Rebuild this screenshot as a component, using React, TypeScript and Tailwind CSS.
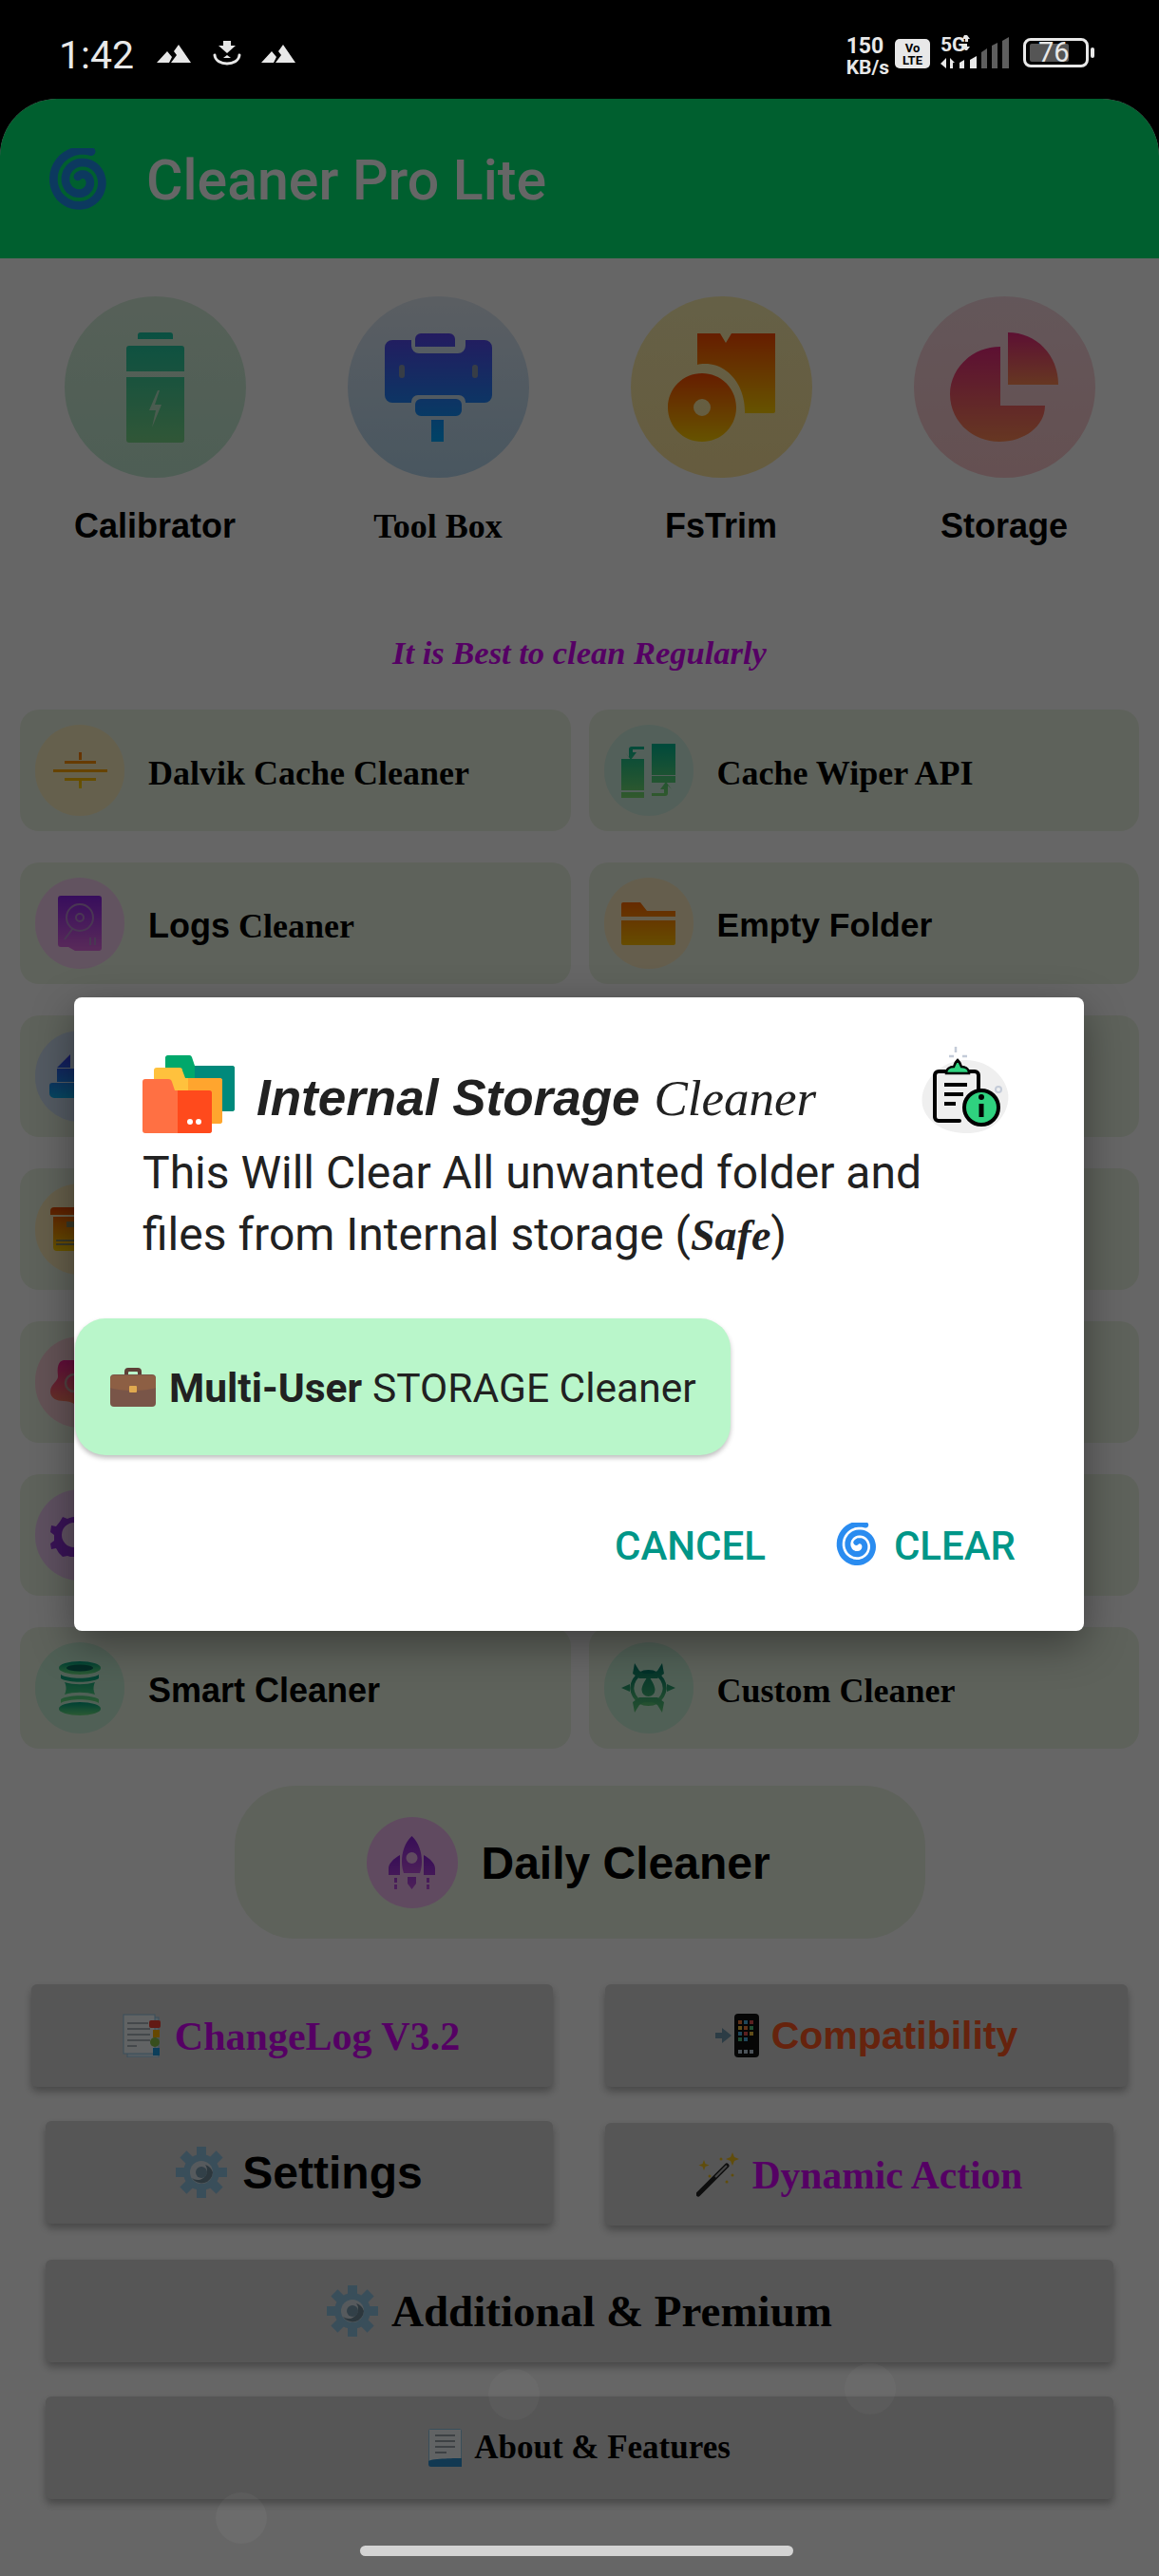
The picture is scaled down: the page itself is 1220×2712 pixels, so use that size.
import type { ReactNode } from 'react';

const sans = "font-['Liberation_Sans',Arial,sans-serif]";
const serif = "font-['Liberation_Serif','Times_New_Roman',serif]";
const roboto = "font-['Roboto',sans-serif]";

// spiral logo, built once from polar points
const spiralPath = (() => {
  const pts: string[] = [];
  const turns = 2.15;
  const steps = 90;
  for (let i = 0; i <= steps; i++) {
    const t = i / steps;
    const a = (-70 - t * 360 * turns) * (Math.PI / 180);
    const r = 21 - 17.5 * t;
    pts.push(`${(24 + r * Math.cos(a)).toFixed(1)} ${(24 + r * Math.sin(a)).toFixed(1)}`);
  }
  return 'M' + pts.join('L');
})();

function Spiral({ className, color }: { className: string; color: string }) {
  return (
    <svg viewBox="2 2 44 44" className={className} preserveAspectRatio="none">
      <path d={spiralPath} fill="none" stroke={color} strokeWidth="5.6" strokeLinecap="round" />
    </svg>
  );
}

function Grad({ id, from, to }: { id: string; from: string; to: string }) {
  return (
    <defs>
      <linearGradient id={id} x1="0" y1="0" x2="0" y2="1">
        <stop offset="0" stopColor={from} />
        <stop offset="1" stopColor={to} />
      </linearGradient>
    </defs>
  );
}

function BatteryIcon() {
  return (
    <svg width="61" height="116" viewBox="0 0 61 116">
      <Grad id="bat" from="#19c9a6" to="#7ad88a" />
      <path
        fill="url(#bat)"
        d="M15 0h31a3 3 0 0 1 3 3v4H12V3a3 3 0 0 1 3-3ZM3 14h55a3 3 0 0 1 3 3v24H0V17a3 3 0 0 1 3-3ZM0 47h61v66a3 3 0 0 1-3 3H3a3 3 0 0 1-3-3Z"
      />
      <path fill="#d8ecd8" d="M33 61 24 82h7l-4 18 10-24h-7l5-15Z" opacity="0.75" />
    </svg>
  );
}

function ToolBoxIcon() {
  return (
    <svg width="113" height="114" viewBox="0 0 113 114">
      <Grad id="tool" from="#5a45f0" to="#00a8ff" />
      <path
        fill="url(#tool)"
        d="M38 0h30a6 6 0 0 1 6 6v8H32V6a6 6 0 0 1 6-6ZM8 7h20v6a8 8 0 0 0 8 8h41a8 8 0 0 0 8-8V7h20a8 8 0 0 1 8 8v50a8 8 0 0 1-8 8H85v-1a7 7 0 0 0-7-7H35a7 7 0 0 0-7 7v1H8a8 8 0 0 1-8-8V15a8 8 0 0 1 8-8ZM38 69h37a6 6 0 0 1 6 6v6a6 6 0 0 1-6 6H38a6 6 0 0 1-6-6v-6a6 6 0 0 1 6-6ZM49 91h13v23H49Z"
      />
      <rect x="15" y="33" width="6" height="14" rx="3" fill="#8a98b0" />
      <rect x="92" y="33" width="6" height="14" rx="3" fill="#8a98b0" />
    </svg>
  );
}

function FsTrimIcon() {
  return (
    <svg width="113" height="114" viewBox="0 0 113 114">
      <Grad id="fst" from="#ff4a00" to="#ffd000" />
      <path
        fill="url(#fst)"
        d="M31 0h24l6 10 6-10h46v82a2 2 0 0 1-2 2H81c1-27-16-52-42-52-3 0-6 0-8 1Z"
      />
      <path
        fill="url(#fst)"
        fillRule="evenodd"
        d="M36 42c20 0 36 16 36 36s-16 36-36 36S0 98 0 78s16-36 36-36Zm0 27a9 9 0 1 0 0 18 9 9 0 0 0 0-18Z"
      />
    </svg>
  );
}

function PieIcon() {
  return (
    <svg width="114" height="116" viewBox="0 0 114 116">
      <Grad id="pie" from="#e8287f" to="#ff8a55" />
      <path fill="url(#pie)" d="M53 15v62h47c0 22-22 38-48 38C22 115 0 92 0 65s23-50 53-50Z" />
      <path fill="url(#pie)" d="M61 0c30 0 53 24 53 55H61Z" />
    </svg>
  );
}

function CapacitorIcon() {
  return (
    <svg width="57" height="38" viewBox="0 0 57 38">
      <Grad id="cap" from="#ff7a00" to="#ffd400" />
      <path
        fill="url(#cap)"
        d="M27 0h3v8h-3ZM12 9h33v3H12ZM0 18h57v3H0ZM12 27h33v3H12ZM27 30h3v8h-3Z"
      />
    </svg>
  );
}

function CacheIcon() {
  return (
    <svg width="57" height="57" viewBox="0 0 57 57">
      <Grad id="cac" from="#00b894" to="#7ddf70" />
      <path
        fill="url(#cac)"
        d="M32 0h25v33H32ZM32 34h25v7H32ZM0 16h24v33H0ZM0 51h24v6H0ZM8 14V6a3 3 0 0 1 3-3h13v3H12v3h4l-6 8-6-8ZM49 44v8a3 3 0 0 1-3 3H32v-3h13v-4h-4l6-8 6 8Z"
      />
    </svg>
  );
}

function DiskIcon() {
  return (
    <svg width="46" height="58" viewBox="0 0 46 58">
      <Grad id="dsk" from="#8a22e8" to="#e06ae0" />
      <path fill="url(#dsk)" d="M3 0h40a3 3 0 0 1 3 3v52a3 3 0 0 1-3 3H18l-7-4H3a3 3 0 0 1-3-3V3a3 3 0 0 1 3-3Z" />
      <circle cx="23" cy="23" r="14" fill="none" stroke="#b78ad0" strokeWidth="2" />
      <circle cx="23" cy="23" r="4" fill="none" stroke="#b78ad0" strokeWidth="2" />
      <path d="M16 34 7 46M34 44v8M39 44v8" stroke="#b78ad0" strokeWidth="2" fill="none" />
    </svg>
  );
}

function FolderIcon() {
  return (
    <svg width="57" height="45" viewBox="0 0 57 45">
      <Grad id="fol" from="#ff6a00" to="#ffbe00" />
      <path fill="url(#fol)" d="M0 2a2 2 0 0 1 2-2h18l7 9h30v6H0ZM0 19h57v24a2 2 0 0 1-2 2H2a2 2 0 0 1-2-2Z" />
    </svg>
  );
}

function BlockIcon() {
  return (
    <svg width="41" height="46" viewBox="0 0 41 46" className="-ml-[1px]">
      <Grad id="blk" from="#3a3ae8" to="#10b0f0" />
      <path fill="url(#blk)" d="M22 0v14H8ZM8 15h33v14H8ZM3 30h38v16H5a5 5 0 0 1-5-5V33a3 3 0 0 1 3-3Z" />
    </svg>
  );
}

function BoxIcon() {
  return (
    <svg width="25" height="46" viewBox="0 0 25 46">
      <Grad id="bx" from="#e84a00" to="#ffd000" />
      <path fill="url(#bx)" d="M4 0h21v8H0V4a4 4 0 0 1 4-4ZM3 10h22v36H7a4 4 0 0 1-4-4Z" />
      <path fill="#8a8a62" d="M17 15h8v6h-8ZM6 34h19v2H6ZM6 38h19v2H6Z" />
    </svg>
  );
}

function BlobIcon() {
  return (
    <svg width="25" height="46" viewBox="0 0 25 46">
      <Grad id="blb" from="#f02090" to="#ff8060" />
      <path fill="url(#blb)" d="M25 0H14C8 1 7 8 8 16c1 6-8 9-8 17 0 7 7 10 14 10 4 0 8 1 11 3Z" />
      <circle cx="25" cy="24" r="9" fill="none" stroke="#c9a0a0" strokeWidth="2.5" />
    </svg>
  );
}

function PurpleGear() {
  return (
    <svg width="25" height="46" viewBox="0 0 25 46">
      <path
        fill="#9030d8"
        d="M25 0v4c-3 0-5 1-7 2l-5-2-3 5-4 5-5-1-1 7 4 3v6l-4 3 1 6 5-1 3 5 4 4 5-1c2 1 4 1 7 1V36a13 13 0 0 1 0-26Z"
      />
    </svg>
  );
}

function SmartIcon() {
  return (
    <svg width="44" height="57" viewBox="0 0 44 57">
      <Grad id="smt" from="#00a080" to="#6ce080" />
      <ellipse cx="22" cy="7" rx="22" ry="7" fill="url(#smt)" />
      <ellipse cx="22" cy="7" rx="14" ry="3.5" fill="#0a6a5a" />
      <path fill="url(#smt)" d="M2 14c8 5 32 5 40 0v4c-8 5-32 5-40 0ZM6 22c10 3 22 3 32 0-2 4-2 9 0 13-10-3-22-3-32 0 2-4 2-9 0-13ZM2 40c8-5 32-5 40 0v4c-8-5-32-5-40 0Z" />
      <ellipse cx="22" cy="50" rx="22" ry="7" fill="url(#smt)" />
    </svg>
  );
}

function CustomIcon() {
  return (
    <svg width="57" height="52" viewBox="0 0 57 52">
      <Grad id="cst" from="#007a68" to="#5cc878" />
      <path fill="none" stroke="url(#cst)" strokeWidth="4" d="M28.5 9a17 17 0 1 0 .01 0Z" />
      <path fill="url(#cst)" d="M28.5 13c5 7 7 12 7 15a7 7 0 0 1-14 0c0-3 2-8 7-15ZM14 0l5 8 5 3h9l5-3 5-8 2 11-7 5H19l-7-5ZM14 52l5-8 5-3h9l5 3 5 8 2-11-7-5H19l-7 5ZM0 26l9-4v8ZM57 26l-9-4v8Z" />
    </svg>
  );
}

function RocketIcon() {
  return (
    <svg width="49" height="56" viewBox="0 0 49 56">
      <Grad id="rkt" from="#8a22d8" to="#c050e0" />
      <path fill="url(#rkt)" fillRule="evenodd" d="M24.5 0C32 7 35 17 35 27c0 5-1 9-2 12H16c-1-3-2-7-2-12 0-10 3-20 10.5-27Zm0 17a6 6 0 1 0 0 12 6 6 0 0 0 0-12Z" />
      <path fill="url(#rkt)" d="M12 20v21H0v-7c0-5 5-10 12-14ZM37 20v21h12v-7c0-5-5-10-12-14ZM20 43h9v7l-4.500 6-4.500-6ZM6 44h3v5H6ZM6 51h3v5H6ZM40 44h3v5h-3ZM40 51h3v5h-3Z" />
    </svg>
  );
}

function Gear({ size = 54 }: { size?: number }) {
  const teeth = [0, 45, 90, 135, 180, 225, 270, 315];
  return (
    <svg width={size} height={size} viewBox="0 0 54 54">
      {teeth.map((deg) => (
        <rect key={deg} x="22" y="0" width="10" height="12" fill="#8fc2e2" transform={`rotate(${deg} 27 27)`} />
      ))}
      <circle cx="27" cy="27" r="19" fill="#8fc2e2" />
      <circle cx="27" cy="27" r="12" fill="#d6e2e8" />
      <path d="M39 27a12 12 0 0 1-22 6 10 10 0 0 0 16-8 8 8 0 0 0-2-6 12 12 0 0 1 8 8Z" fill="#6e8a9a" />
      <circle cx="27" cy="27" r="6" fill="#7da0b4" />
    </svg>
  );
}

function NotebookIcon() {
  return (
    <svg width="41" height="46" viewBox="0 0 41 46">
      <rect x="5" y="4" width="33" height="42" fill="#cfe6f5" stroke="#8fc2e2" />
      <rect x="1" y="1" width="33" height="41" fill="#f2f7fa" stroke="#8fc2e2" />
      <path d="M5 10h22M5 16h24M5 22h24M5 28h24M5 34h10" stroke="#aab4bb" strokeWidth="2" />
      <rect x="28" y="7" width="12" height="8" rx="2" fill="#f44336" />
      <rect x="32" y="17" width="7" height="8" fill="#ffb300" />
      <circle cx="34" cy="30" r="5" fill="#8bc34a" />
      <rect x="32" y="36" width="7" height="8" fill="#1e9be0" />
    </svg>
  );
}

function PhoneIcon() {
  return (
    <svg width="46" height="46" viewBox="0 0 46 46">
      <path d="M0 20h7v-5l10 8-10 8v-5H0Z" fill="#6f97ad" />
      <rect x="20" y="0" width="26" height="46" rx="4" fill="#111" />
      <g fill="#ef7a3c">
        <rect x="24" y="7" width="4" height="4" />
        <rect x="30" y="7" width="4" height="4" fill="#4fb0e0" />
        <rect x="36" y="7" width="4" height="4" fill="#e05050" />
        <rect x="24" y="13" width="4" height="4" fill="#f0c040" />
        <rect x="30" y="13" width="4" height="4" />
        <rect x="36" y="13" width="4" height="4" fill="#50c080" />
        <rect x="24" y="19" width="4" height="4" fill="#4fb0e0" />
        <rect x="30" y="19" width="4" height="4" fill="#e05050" />
        <rect x="36" y="19" width="4" height="4" fill="#f0c040" />
        <rect x="24" y="25" width="4" height="4" fill="#50c080" />
        <rect x="30" y="25" width="4" height="4" fill="#4fb0e0" />
        <rect x="24" y="38" width="4" height="4" fill="#bcd" />
        <rect x="30" y="38" width="4" height="4" fill="#bcd" />
        <rect x="36" y="38" width="4" height="4" fill="#bcd" />
      </g>
    </svg>
  );
}

function WandIcon() {
  return (
    <svg width="45" height="47" viewBox="0 0 45 47">
      <path d="M32 14 2 44" stroke="#222" strokeWidth="5" strokeLinecap="round" />
      <path d="M32 14 20 26" stroke="#e8e8e8" strokeWidth="2" opacity="0.7" />
      <g fill="#f0c020">
        <path d="m38 0 2 5 5 2-5 2-2 5-2-5-5-2 5-2Z" />
        <path d="m8 8 1.500 4 4 1.500-4 1.500L8 19l-1.500-4-4-1.500 4-1.500Z" />
        <circle cx="26" cy="7" r="1.500" />
        <circle cx="14" cy="25" r="1.500" />
        <circle cx="38" cy="24" r="1.500" />
        <circle cx="32" cy="31" r="1.500" />
      </g>
    </svg>
  );
}

function BookIcon() {
  return (
    <svg width="35" height="40" viewBox="0 0 35 40">
      <rect x="0.500" y="0.500" width="34" height="39" rx="1" fill="#f2f7fa" stroke="#8fc2e2" />
      <path d="M7 7h21M7 13h21M7 19h21M7 25h12" stroke="#9aa4aa" strokeWidth="2" />
      <path d="M0 34c4-3 31-3 35-3v9H3a3 3 0 0 1-3-3Z" fill="#2f8fcc" />
    </svg>
  );
}

function Briefcase() {
  return (
    <svg width="48" height="42" viewBox="0 0 48 42">
      <path d="M15 9V5a4 4 0 0 1 4-4h10a4 4 0 0 1 4 4v4h-4V6a1 1 0 0 0-1-1h-8a1 1 0 0 0-1 1v3Z" fill="#5d4037" />
      <rect x="0" y="8" width="48" height="34" rx="4" fill="#795548" />
      <path d="M0 22c10 4 38 4 48 0v-9a4 4 0 0 0-4-4H4a4 4 0 0 0-4 4Z" fill="#8d5f44" />
      <rect x="20" y="20" width="8" height="7" rx="1" fill="#e0a94f" />
    </svg>
  );
}

function Folders() {
  return (
    <svg width="97" height="82" viewBox="0 0 97 82">
      <path d="M24 2a3 3 0 0 1 3-2h22a3 3 0 0 1 3 2l3 9h39a3 3 0 0 1 3 3v42a3 3 0 0 1-3 3H24Z" fill="#00a86b" />
      <path d="M55 11h39a3 3 0 0 1 3 3v42a3 3 0 0 1-3 3H55Z" fill="#00897b" />
      <path d="M12 16a3 3 0 0 1 3-3h24a3 3 0 0 1 3 3l3 8h36a3 3 0 0 1 3 3v42a3 3 0 0 1-3 3H12Z" fill="#ffc13d" />
      <path d="M48 24h33a3 3 0 0 1 3 3v42a3 3 0 0 1-3 3H48Z" fill="#ffa52e" />
      <path d="M0 28a3 3 0 0 1 3-3h24a4 4 0 0 1 4 3l3 9h36a3 3 0 0 1 3 3v39a3 3 0 0 1-3 3H3a3 3 0 0 1-3-3Z" fill="#ff7043" />
      <path d="M37 37h33a3 3 0 0 1 3 3v39a3 3 0 0 1-3 3H37Z" fill="#ff4a1c" />
      <circle cx="50" cy="70" r="3" fill="#fff" />
      <circle cx="59" cy="70" r="3" fill="#fff" />
    </svg>
  );
}

function ClipboardInfo() {
  return (
    <svg width="93" height="92" viewBox="0 0 93 92">
      <path d="M47 14c20 0 40 14 44 34 3 20-12 42-40 43C28 92 6 82 1 62-3 40 18 14 47 14Z" fill="#efefef" />
      <path d="M36 0v6M29 10h5M43 10h5" stroke="#c4cbd8" strokeWidth="2.500" />
      <circle cx="81" cy="45" r="3" fill="none" stroke="#c4cbd8" strokeWidth="2" />
      <path d="M25 26h-7a4 4 0 0 0-4 4v44a4 4 0 0 0 4 4h22M50 26h6a4 4 0 0 1 4 4v20" fill="none" stroke="#000" strokeWidth="4" strokeLinecap="round" />
      <path d="M38 14c3 3 3 5 4 7 4 0 8 2 8 7H26c0-5 4-7 8-7 1-2 1-4 4-7Z" fill="#2fd27f" stroke="#000" strokeWidth="2.500" />
      <path d="M24 40h24M24 50h20M24 60h12" stroke="#000" strokeWidth="4" />
      <circle cx="63" cy="64" r="18" fill="#2fd27f" stroke="#000" strokeWidth="4" />
      <path d="M63 60v14" stroke="#000" strokeWidth="5" />
      <circle cx="63" cy="53" r="3" fill="#000" />
    </svg>
  );
}

function Mountains() {
  return (
    <svg width="36" height="20" viewBox="0 0 36 20">
      <path fill="#e8e8e8" d="M0 19 11 7l5 6-3 6ZM15 19l6-8-3-4 5-7 13 19Z" />
    </svg>
  );
}

function DownloadBowl() {
  return (
    <svg width="30" height="27" viewBox="0 0 30 27">
      <path fill="#e8e8e8" d="M11 0h8v5h5l-9 8-9-8h5Z" />
      <path d="M2 15c1 12 25 12 26 0" fill="none" stroke="#e8e8e8" strokeWidth="3" strokeLinecap="round" />
      <path d="M11 18h8l-4-3Z" fill="#e8e8e8" />
    </svg>
  );
}

function Signal() {
  return (
    <svg width="72" height="44" viewBox="0 -8 72 44" className={`-mt-[8px] ${roboto}`}>
      <text x="0" y="17" fontSize="21" fontWeight="700" fill="#e8e8e8">5G</text>
      <path fill="#e8e8e8" d="M25 0h3l3 4h-2v3h-3V4h-3ZM25 9h3v3h3l-3 4h-2l-3-4h2Z" />
      <path fill="#e8e8e8" d="M6 24v11L0 30ZM8 24l0 11h0ZM10 24l5 5h-2v6h-3ZM20 29l5-3v9h-5ZM31 26l7-4v13h-7Z" />
      <path fill="#5e5e5e" d="M43 18l6-4v21h-6ZM54 11l6-3v27h-6ZM65 6l7-4v33h-7Z" />
    </svg>
  );
}

function StatusBar() {
  return (
    <div className={`relative z-20 flex h-[104px] items-start bg-black pl-[62px] pr-[68px] pt-[38px] ${roboto}`}>
      <span className="text-[41px] leading-[40px] text-[#e8e8e8]">1:42</span>
      <div className="ml-[24px] mt-[9px]"><Mountains /></div>
      <div className="ml-[23px] mt-[5px]"><DownloadBowl /></div>
      <div className="ml-[21px] mt-[9px]"><Mountains /></div>
      <div className="ml-auto -mt-[1px] flex items-start">
        <div className="mt-[1px] flex flex-col items-start text-[23px] font-bold leading-[22px] text-[#e8e8e8]">
          <span>150</span>
          <span className="text-[21px]">KB/s</span>
        </div>
        <div className="ml-[6px] mt-[4px] flex h-[31px] w-[37px] flex-col items-center justify-center rounded-[5px] bg-[#e8e8e8] text-[13px] font-bold leading-[13px] text-black">
          <span>Vo</span>
          <span>LTE</span>
        </div>
        <div className="ml-[11px]"><Signal /></div>
        <div className="relative ml-[15px] mt-[3px] flex h-[31px] w-[69px] items-center rounded-[8px] border-[3px] border-[#e8e8e8] pl-[4px]">
          <div className="h-[19px] w-[41px] rounded-[2px] bg-[#555]" />
          <span className="absolute left-[13px] top-[-3px] text-[29px] leading-[31px] text-[#e8e8e8]">76</span>
        </div>
        <div className="ml-[2px] mt-[13px] h-[11px] w-[4px] rounded-[2px] bg-[#e8e8e8]" />
      </div>
    </div>
  );
}

function Header() {
  return (
    <header className="flex h-[168px] items-start rounded-t-[60px] bg-[#00ed76] pl-[51px] pt-[52px]">
      <Spiral className="h-[69px] w-[68px] shrink-0" color="#1f8fee" />
      <h1 className={`ml-[35px] mt-[1px] whitespace-nowrap text-[59px] font-medium leading-[66px] text-white ${roboto}`}>Cleaner Pro Lite</h1>
    </header>
  );
}

type Tile = { label: string; font: string; circle: string; icon: ReactNode };

const tiles: Tile[] = [
  { label: 'Calibrator', font: sans, circle: 'from-[#d8f0dc] to-[#c2ecd4]', icon: <BatteryIcon /> },
  { label: 'Tool Box', font: serif, circle: 'from-[#e2ebf6] to-[#b6d8f0]', icon: <ToolBoxIcon /> },
  { label: 'FsTrim', font: sans, circle: 'from-[#fdf0b0] to-[#fee69c]', icon: <FsTrimIcon /> },
  { label: 'Storage', font: sans, circle: 'from-[#f8d8e0] to-[#fcc8cc]', icon: <PieIcon /> },
];

function Card({ circle, icon, children }: { circle: string; icon?: ReactNode; children?: ReactNode }) {
  return (
    <div className="flex h-[128px] items-center rounded-[20px] bg-[#ecf5e4] pl-[16px]">
      <div className={`flex h-[96px] w-[94px] items-center justify-center rounded-full ${circle}`}>{icon}</div>
      {children}
    </div>
  );
}

function CardLabel({ font, size = 'text-[36px]', children }: { font: string; size?: string; children: ReactNode }) {
  return <span className={`ml-[25px] mt-[5px] font-bold text-black ${size} ${font}`}>{children}</span>;
}

function GrayButton({ className, children }: { className: string; children: ReactNode }) {
  return (
    <div className={`flex h-[108px] items-center justify-center rounded-[6px] bg-[#d6d6d6] shadow-[0_5px_8px_rgba(0,0,0,0.3)] ${className}`}>
      {children}
    </div>
  );
}

function Dialog() {
  return (
    <div className="absolute left-[78px] top-[1050px] z-30 h-[667px] w-[1063px] rounded-[8px] bg-white shadow-[0_14px_44px_rgba(0,0,0,0.38)]">
      <div className="flex items-start pl-[72px] pr-[78px] pt-[52px]">
        <div className="mt-[9px] shrink-0"><Folders /></div>
        <h2 className="ml-[23px] mt-[24px] whitespace-nowrap text-[#212121]">
          <span className={`text-[53px] font-bold italic leading-[60px] ${sans}`}>Internal Storage</span>
          <span className={`ml-[15px] text-[53px] italic leading-[60px] ${serif}`}>Cleaner</span>
        </h2>
        <div className="ml-auto"><ClipboardInfo /></div>
      </div>
      <div className={`mt-[8px] pl-[72px] text-[48px] leading-[65px] text-[#212121] ${roboto}`}>
        <p>This Will Clear All unwanted folder and</p>
        <p>
          <span>files from Internal storage (</span>
          <span className={`text-[46px] font-bold italic ${serif}`}>Safe</span>
          <span>)</span>
        </p>
      </div>
      <div className={`mt-[55px] ml-[1px] flex h-[144px] w-[690px] items-center rounded-[32px] bg-[#b9f6ca] pl-[37px] text-[42.5px] text-[#212121] shadow-[0_3px_5px_rgba(0,0,0,0.25)] ${roboto}`}>
        <Briefcase />
        <span className="ml-[14px] mt-[3px] font-bold">Multi-User</span>
        <span className="ml-[11px] mt-[3px]">STORAGE Cleaner</span>
      </div>
      <div className={`mt-[69px] flex items-center justify-end pr-[72px] text-[42px] font-medium leading-[48px] text-[#009688] ${roboto}`}>
        <span className="mt-[3px]">CANCEL</span>
        <Spiral className="ml-[74px] h-[48px] w-[47px]" color="#2a8cf0" />
        <span className="ml-[14px] mt-[3px]">CLEAR</span>
      </div>
    </div>
  );
}

export default function App() {
  return (
    <div className="relative h-[2712px] w-[1220px] overflow-hidden bg-black">
      <StatusBar />
      <div className="h-[2608px] overflow-hidden rounded-t-[60px] bg-white">
        <Header />

        <div className="grid grid-cols-4 px-[14px] pt-[40px]">
          {tiles.map((t) => (
            <div key={t.label} className="flex flex-col items-center">
              <div className={`flex h-[191px] w-[191px] items-center justify-center rounded-full bg-gradient-to-b ${t.circle}`}>{t.icon}</div>
              <span className={`mt-[31px] text-[36px] font-bold leading-[40px] text-black ${t.font}`}>{t.label}</span>
            </div>
          ))}
        </div>

        <p className={`mt-[93px] text-center text-[34.5px] font-bold italic leading-[40px] text-[#d500f9] ${serif}`}>It is Best to clean Regularly</p>

        <div className="mt-[40px] grid grid-cols-2 gap-x-[19px] gap-y-[33px] px-[21px]">
          <Card circle="bg-[#fdf0c0]" icon={<CapacitorIcon />}><CardLabel font={serif}>Dalvik Cache Cleaner</CardLabel></Card>
          <Card circle="bg-[#d0f0e0]" icon={<CacheIcon />}><CardLabel font={serif}>Cache Wiper API</CardLabel></Card>
          <Card circle="bg-[#f6d0f0]" icon={<DiskIcon />}>
            <span className={`ml-[25px] mt-[5px] text-[36px] font-bold text-black ${sans}`}>Logs</span>
            <span className={`ml-[9px] mt-[5px] text-[36px] font-bold text-black ${serif}`}>Cleaner</span>
          </Card>
          <Card circle="bg-[#fdecc0]" icon={<FolderIcon />}><CardLabel font={sans} size="text-[35.5px]">Empty Folder</CardLabel></Card>
          <Card circle="justify-start! pl-[16px] bg-[#cfe0f4]" icon={<BlockIcon />} />
          <Card circle="bg-[#d8f0dc]" />
          <Card circle="justify-start! pl-[16px] bg-[#fdecb8]" icon={<BoxIcon />} />
          <Card circle="bg-[#d8f0dc]" />
          <Card circle="justify-start! pl-[16px] bg-[#f8ccd4]" icon={<BlobIcon />} />
          <Card circle="bg-[#d8f0dc]" />
          <Card circle="justify-start! pl-[16px] bg-[#ecc8f0]" icon={<PurpleGear />} />
          <Card circle="bg-[#d8f0dc]" />
          <Card circle="bg-[#c8f0d8]" icon={<SmartIcon />}><CardLabel font={sans}>Smart Cleaner</CardLabel></Card>
          <Card circle="bg-[#c8f0d8]" icon={<CustomIcon />}><CardLabel font={serif}>Custom Cleaner</CardLabel></Card>
        </div>

        <div className="mx-auto mt-[39px] flex h-[161px] w-[727px] items-center rounded-[64px] bg-[#ecf5e4] pl-[139px]">
          <div className="flex h-[96px] w-[96px] items-center justify-center rounded-full bg-[#f0b8f0]"><RocketIcon /></div>
          <span className={`ml-[25px] mt-[2px] text-[48px] font-bold text-black ${sans}`}>Daily Cleaner</span>
        </div>

        <div className="mt-[48px] flex pl-[33px]">
          <GrayButton className="w-[549px] gap-[14px] pr-[2px]">
            <NotebookIcon />
            <span className={`mt-[2px] text-[42px] font-bold text-[#d500f9] ${serif}`}>ChangeLog V3.2</span>
          </GrayButton>
          <GrayButton className="ml-[55px] w-[550px] gap-[13px]">
            <PhoneIcon />
            <span className={`mt-[2px] text-[41px] font-bold text-[#ff5722] ${sans}`}>Compatibility</span>
          </GrayButton>
        </div>
        <div className="mt-[36px] flex items-start pl-[48px]">
          <GrayButton className="w-[534px] gap-[16px]">
            <Gear />
            <span className={`mt-[2px] text-[48px] font-bold text-black ${sans}`}>Settings</span>
          </GrayButton>
          <GrayButton className="ml-[55px] mt-[2px] w-[535px] gap-[14px]">
            <WandIcon />
            <span className={`mt-[2px] text-[41.5px] font-bold text-[#d500f9] ${serif}`}>Dynamic Action</span>
          </GrayButton>
        </div>
        <div className="mt-[36px] px-[48px]">
          <GrayButton className="gap-[14px]">
            <Gear />
            <span className={`text-[47px] font-bold text-black ${serif}`}>Additional &amp; Premium</span>
          </GrayButton>
        </div>
        <div className="mt-[36px] px-[48px]">
          <GrayButton className="gap-[13px]">
            <BookIcon />
            <span className={`text-[35px] font-bold text-black ${serif}`}>About &amp; Features</span>
          </GrayButton>
        </div>
      </div>

      {/* dim layer under the dialog */}
      <div className="absolute inset-x-0 bottom-0 top-[104px] z-10 bg-black/60" />

      {/* touch traces */}
      <div className="absolute left-[514px] top-[2494px] z-20 h-[54px] w-[54px] rounded-full bg-white/[0.03]" />
      <div className="absolute left-[889px] top-[2488px] z-20 h-[54px] w-[54px] rounded-full bg-white/[0.03]" />
      <div className="absolute left-[227px] top-[2624px] z-20 h-[54px] w-[54px] rounded-full bg-white/[0.04]" />

      <Dialog />

      <div className="absolute left-[379px] top-[2680px] z-20 h-[11px] w-[456px] rounded-full bg-[#d3d3d3]" />
    </div>
  );
}
